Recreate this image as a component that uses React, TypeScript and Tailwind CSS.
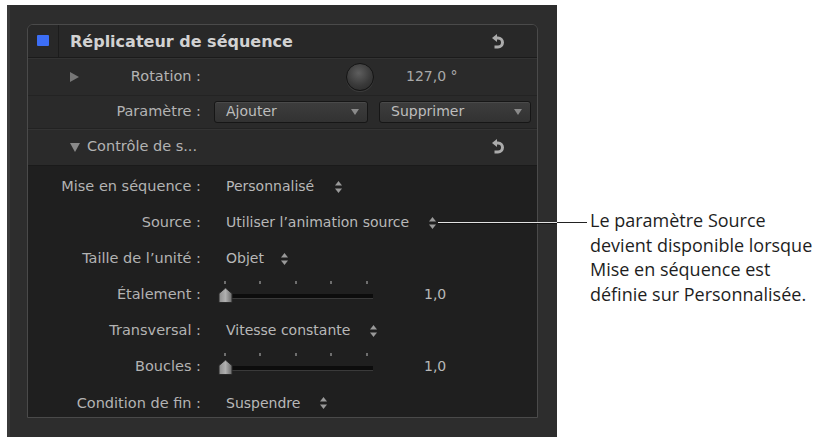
import React from "react";

const panelFont = { fontFamily: '"DejaVu Sans", "Liberation Sans", sans-serif' };

const UndoIcon = () => (
  <svg width="12" height="16" viewBox="0 0 12 16" className="text-[#ababab]">
    <polygon points="0,4 5,0 5,8" fill="currentColor" />
    <path d="M4.5 4 H6 A4.5 4.5 0 0 1 6 13 H2.5" fill="none" stroke="currentColor" strokeWidth="3" />
  </svg>
);

const Stepper = () => (
  <svg width="7" height="12" viewBox="0 0 7 12" className="text-[#9a9a9a]">
    <polygon points="3.5,0 7,4.5 0,4.5" fill="currentColor" />
    <polygon points="0,7.5 7,7.5 3.5,12" fill="currentColor" />
  </svg>
);

const DownArrow = () => (
  <svg width="8" height="6" viewBox="0 0 8 6" className="text-[#8a8a8a]">
    <polygon points="0,0 8,0 4,6" fill="currentColor" />
  </svg>
);

const Popup = ({ label, width }: { label: string; width: string }) => (
  <div
    className={`${width} h-[22px] flex items-center justify-between pl-[11px] pr-[8px] rounded-[3px] border border-[#161616] bg-gradient-to-b from-[#3d3d3d] to-[#323232] shadow-[inset_0_1px_0_#4a4a4a] text-[14px] text-[#bdbdbd]`}
  >
    <span>{label}</span>
    <DownArrow />
  </div>
);

const Slider = () => (
  <div className="relative w-[160px] h-[36px]">
    {[10, 45, 81, 116, 152].map((x) => (
      <div key={x} className="absolute top-[4px] w-[2px] h-[3px] bg-[#6e6e6e]" style={{ left: x }} />
    ))}
    <div className="absolute left-[12px] top-[17px] w-[147px] h-[5px] bg-[#0c0c0c] border-b border-[#3a3a3a]" />
    <svg width="15" height="15" viewBox="0 0 15 15" className="absolute left-[4px] top-[11px]">
      <defs>
        <linearGradient id="thumb" x1="0" x2="1" y1="0" y2="0">
          <stop offset="0" stopColor="#8c8c8c" />
          <stop offset="0.5" stopColor="#b0b0b0" />
          <stop offset="1" stopColor="#6a6a6a" />
        </linearGradient>
      </defs>
      <polygon points="7.5,0 14,5.5 14,14.5 1,14.5 1,5.5" fill="url(#thumb)" stroke="#2a2a2a" strokeWidth="1" />
    </svg>
  </div>
);

const Row = ({ label, children, h = "h-[36px]" }: { label: string; children?: React.ReactNode; h?: string }) => (
  <div className={`flex items-center ${h}`}>
    <div className="w-[173px] text-right text-[14.5px] text-[#b3b3b3]">{label}</div>
    <div className="ml-[13px] flex items-center text-[14px] text-[#b8b8b8]">{children}</div>
  </div>
);

const Choice = ({ value, gap }: { value: string; gap: string }) => (
  <div className="flex items-center pl-[12px]">
    <span>{value}</span>
    <span className={gap}>
      <Stepper />
    </span>
  </div>
);

export default function App() {
  return (
    <div className="relative w-[821px] h-[440px] bg-white flex items-start overflow-hidden">
      <div
        className="ml-[7px] mt-[5px] w-[550px] h-[432px] bg-[#2d2d2d] border-l-[3px] border-[#393939] pl-[17px] pt-[19px]"
        style={panelFont}
      >
        <div className="w-[511px] h-[394px] rounded-t-[6px] border border-[#4a4a4a] bg-[#2a2a2a] flex flex-col overflow-hidden">
          {/* header */}
          <div className="h-[33px] flex items-center bg-[#282828] border-b border-[#1b1b1b]">
            <div className="w-[31px] h-full flex items-center justify-center border-r border-[#1c1c1c]">
              <div className="w-[12px] h-[11px] bg-[#3c6ef6] rounded-[1px]" />
            </div>
            <div className="ml-[11px] text-[16px] font-bold text-[#d2d2d2] flex-1 pt-[2px]">Réplicateur de séquence</div>
            <div className="mr-[33px] flex items-center pt-[2px]">
              <UndoIcon />
            </div>
          </div>

          {/* rotation */}
          <div className="h-[39px] flex items-center border-b border-[#232323] border-t border-t-[#333333]">
            <svg width="9" height="10" viewBox="0 0 9 10" className="ml-[42px] text-[#777]">
              <polygon points="0,0 9,5 0,10" fill="currentColor" />
            </svg>
            <div className="w-[122px] text-right text-[14.5px] text-[#b3b3b3]">Rotation :</div>
            <div className="ml-[145px] w-[28px] h-[28px] rounded-full border border-[#151515] bg-[radial-gradient(circle_at_45%_35%,#5e5e5e,#3a3a3a_55%,#262626)] shadow-[0_1px_0_#3c3c3c]" />
            <div className="ml-[32px] text-[14px] text-[#a9a9a9]">127,0 °</div>
          </div>

          {/* paramètre */}
          <div className="h-[33px] flex items-center border-b border-[#222222]">
            <div className="w-[173px] text-right text-[14.5px] text-[#b3b3b3]">Paramètre :</div>
            <div className="ml-[13px]">
              <Popup label="Ajouter" width="w-[154px]" />
            </div>
            <div className="ml-[11px]">
              <Popup label="Supprimer" width="w-[152px]" />
            </div>
          </div>

          {/* contrôle */}
          <div className="h-[38px] flex items-center border-b border-[#1a1a1a] border-t border-t-[#333333]">
            <svg width="10" height="9" viewBox="0 0 10 9" className="ml-[42px] text-[#8a8a8a]">
              <polygon points="0,0 10,0 5,9" fill="currentColor" />
            </svg>
            <div className="ml-[7px] flex-1 text-[14.5px] text-[#b3b3b3]">Contrôle de s...</div>
            <div className="mr-[33px] flex items-center">
              <UndoIcon />
            </div>
          </div>

          {/* lower section */}
          <div className="flex-1 bg-[#1f1f1f] pt-[3px] flex flex-col">
            <Row label="Mise en séquence :">
              <Choice value="Personnalisé" gap="ml-[21px]" />
            </Row>
            <Row label="Source :">
              <Choice value="Utiliser l’animation source" gap="ml-[20px]" />
            </Row>
            <Row label="Taille de l’unité :">
              <Choice value="Objet" gap="ml-[17px]" />
            </Row>
            <Row label="Étalement :">
              <Slider />
              <span className="ml-[50px]">1,0</span>
            </Row>
            <Row label="Transversal :">
              <Choice value="Vitesse constante" gap="ml-[20px]" />
            </Row>
            <Row label="Boucles :">
              <Slider />
              <span className="ml-[50px]">1,0</span>
            </Row>
            <Row label="Condition de fin :" h="h-[32px] pt-[5px]">
              <Choice value="Suspendre" gap="ml-[20px]" />
            </Row>
          </div>
        </div>
      </div>

      {/* leader line */}
      <div className="absolute left-[438px] top-[222px] w-[119px] h-[1px] bg-[#e2e2e2] shadow-[0_1px_0_#111]" />
      <div className="absolute left-[557px] top-[222px] w-[30px] h-[1px] bg-[#222]" />

      <div
        className="ml-[33px] mt-[208px] text-[18px] leading-[24.7px] text-[#1e1e1e]"
        style={{ fontFamily: '"Open Sans", "Noto Sans", sans-serif' }}
      >
        <div>Le paramètre Source</div>
        <div>devient disponible lorsque</div>
        <div>Mise en séquence est</div>
        <div>définie sur Personnalisée.</div>
      </div>
    </div>
  );
}
